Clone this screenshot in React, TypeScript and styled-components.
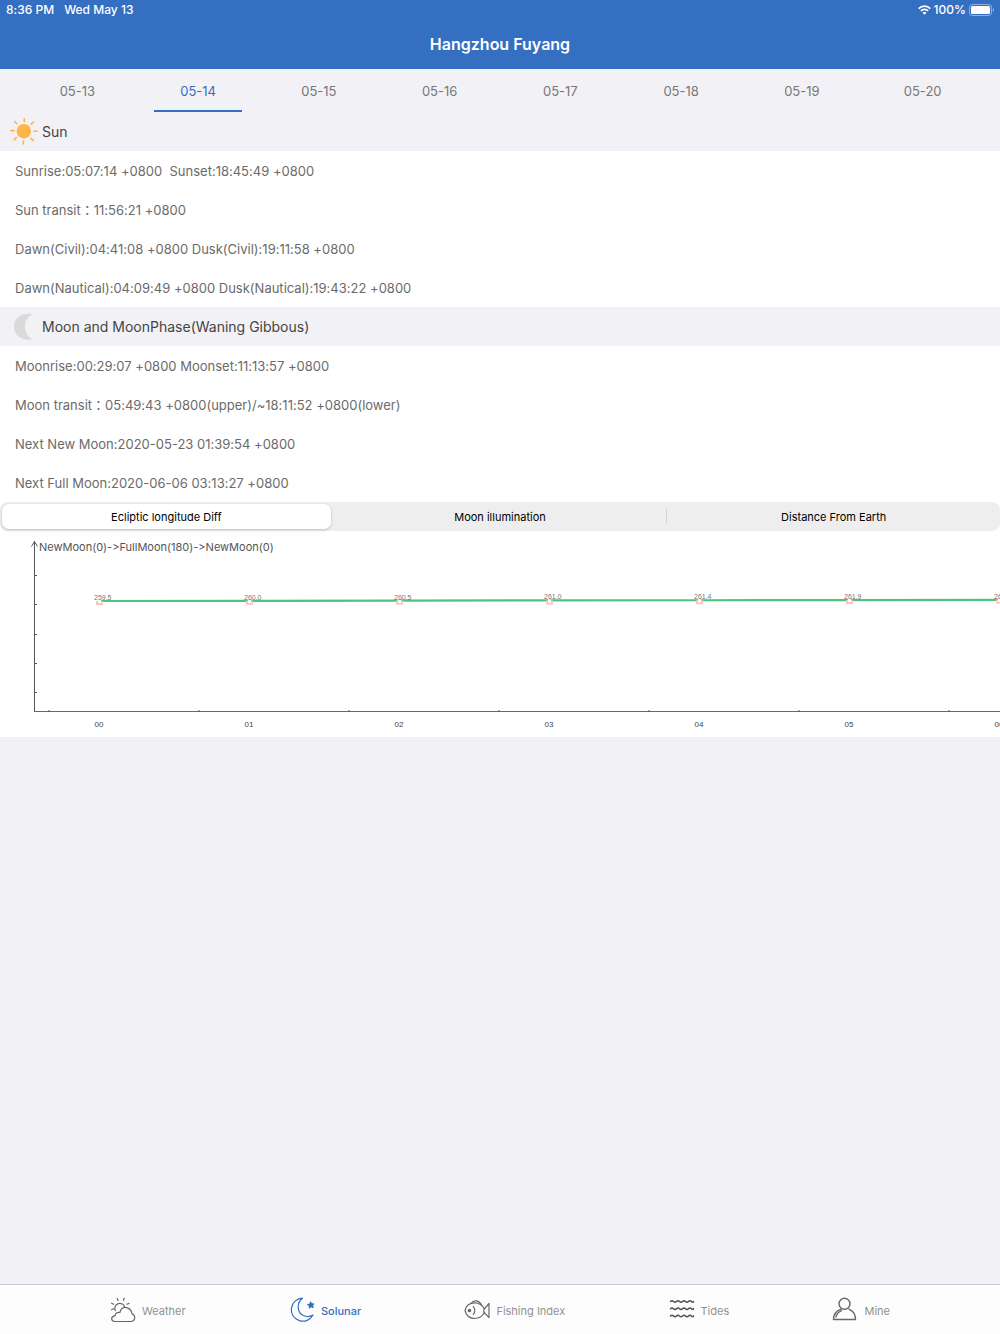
import React, { useState } from "react";
import styled, { createGlobalStyle } from "styled-components";

const BLUE = "#346fc2";

const GlobalStyle = createGlobalStyle`
  * { box-sizing: border-box; }
  body {
    margin: 0;
    background: #f2f1f6;
    font-family: Inter, "Liberation Sans", "Noto Sans CJK TC", sans-serif;
    font-variant-ligatures: no-contextual;
  }
  button {
    font-family: inherit;
    font-variant-ligatures: inherit;
    border: 0;
    padding: 0;
    margin: 0;
    background: none;
    cursor: pointer;
  }
`;

const Screen = styled.div`
  min-height: 100vh;
  display: flex;
  flex-direction: column;
`;

const Header = styled.header`
  background: ${BLUE};
  color: #fff;
`;

const StatusBar = styled.div`
  display: flex;
  align-items: center;
  height: 20px;
  padding: 0 6px;
  font-size: 12px;
  font-weight: 500;
  line-height: 20px;
`;

const StatusDate = styled.span`
  margin-left: 10px;
`;

const StatusRight = styled.div`
  display: flex;
  align-items: center;
  gap: 3px;
  margin-left: auto;
`;

const Title = styled.h1`
  margin: 0;
  height: 49px;
  line-height: 49px;
  text-align: center;
  font-size: 16px;
  font-weight: 600;
`;

const DateTabs = styled.nav`
  display: flex;
  height: 43px;
  padding: 0 17px;
`;

const DateTab = styled.button<{ $active: boolean }>`
  flex: 1;
  display: flex;
  justify-content: center;
  font-size: 13px;
  color: ${(p) => (p.$active ? BLUE : "#777")};
`;

const TabLabel = styled.span<{ $active: boolean }>`
  width: 88px;
  height: 43px;
  line-height: 44px;
  border-bottom: 2px solid ${(p) => (p.$active ? BLUE : "transparent")};
`;

const SectionHeader = styled.h2`
  display: flex;
  align-items: center;
  gap: 4px;
  height: 39px;
  margin: 0;
  padding: 0 10px;
  line-height: 38px;
  font-size: 14px;
  font-weight: 400;
  color: #444;
`;

const Row = styled.p`
  margin: 0;
  height: 39px;
  padding: 0 15px;
  line-height: 40px;
  font-size: 13px;
  color: #6b6b6b;
  background: #fff;
  white-space: pre;
`;

const SegmentBackdrop = styled.div`
  background: #fff;
`;

const Segments = styled.div`
  display: flex;
  align-items: center;
  height: 29px;
  padding: 0 2px;
  border-radius: 8px;
  background: #eee;
`;

const Segment = styled.button<{ $active: boolean }>`
  flex: 1;
  height: 25px;
  border-radius: 7px;
  font-size: 11px;
  font-weight: 400;
  color: #000;
  ${(p) => p.$active && "background: #fff; box-shadow: 0 1px 3px rgba(0, 0, 0, 0.2);"}
`;

const Divider = styled.span<{ $visible: boolean }>`
  width: 1px;
  height: 15px;
  margin: 0 2px;
  background: ${(p) => (p.$visible ? "#d2d2d4" : "transparent")};
`;

const ChartPanel = styled.div`
  height: 206px;
  overflow: hidden;
  background: #fff;
`;

const ChartSvg = styled.svg`
  display: block;
  width: 100%;
  height: 206px;
`;

const ChartTitle = styled.text`
  font-size: 11px;
  fill: #555;
`;

const HourLabel = styled.text`
  font: 8px "Liberation Sans", sans-serif;
  fill: #444;
`;

const ValueLabel = styled.text`
  font: 7px "Liberation Sans", sans-serif;
  fill: #777;
`;

const TabBar = styled.nav`
  display: flex;
  justify-content: space-between;
  align-items: center;
  height: 50px;
  margin-top: auto;
  padding: 0 11%;
  border-top: 1px solid #cbcbd2;
  background: #fdfdfd;
`;

const TabButton = styled.button<{ $active: boolean }>`
  display: flex;
  align-items: center;
  gap: 6px;
  height: 49px;
  font-size: 11px;
  font-weight: ${(p) => (p.$active ? 500 : 400)};
  color: ${(p) => (p.$active ? BLUE : "#929292")};
`;

const TabName = styled.span`
  padding-top: 2px;
`;

const TabIcon = styled.svg<{ $active: boolean }>`
  width: 26px;
  height: 26px;
  fill: none;
  stroke: ${(p) => (p.$active ? BLUE : "#686868")};
  stroke-width: 1.200;
  stroke-linecap: round;
  stroke-linejoin: round;
`;

const WifiIcon = () => (
  <svg width="13" height="10" viewBox="0 0 13 10" fill="none" stroke="#fff" strokeWidth="1.8">
    <path d="M.7 3.6a8.2 8.2 0 0 1 11.6 0" />
    <path d="M2.9 5.9a5.1 5.1 0 0 1 7.2 0" />
    <path d="M6.5 9.8 4.5 7.7a2.9 2.9 0 0 1 4 0z" fill="#fff" stroke="none" />
  </svg>
);

const BatteryIcon = () => (
  <svg width="25" height="12" viewBox="0 0 25 12">
    <rect x=".5" y=".5" width="22" height="11" rx="3" fill="none" stroke="#fff" strokeOpacity=".45" />
    <rect x="2" y="2" width="19" height="8" rx="1.6" fill="#fff" />
    <path d="M23.8 4v4q1.2-.5 1.2-2t-1.2-2z" fill="#fff" opacity=".5" />
  </svg>
);

const SunIcon = () => (
  <svg width="28" height="28" viewBox="0 0 28 28" stroke="#fdb448" strokeWidth="1.6" strokeLinecap="round">
    <circle cx="13.8" cy="13.2" r="7.2" fill="#fdb448" stroke="none" />
    <path d="M14.3.9v2.900M13.300 23v3M.9 12.600h3.200M24 13.300h3M4.700 3.500l2.100 2.300M23.500 4l-2.200 2.100M4.100 21.800l2.300-2.200M21 20.200l2.200 2.400" />
  </svg>
);

const MoonIcon = () => (
  <svg width="28" height="28" viewBox="0 0 28 28">
    <path d="M22.5 1.200C12-1 4 5 4 13.500s8 15 18.500 12.800C17.500 23.800 15 19.200 15 13.500s2.500-9.800 7.500-12.300z" fill="#dadadb" />
  </svg>
);

const WeatherPaths = () => (
  <>
    <path d="M4.800 24.500h16.200a3.900 3.900 0 0 0 1-7.600C21.700 13.800 19.800 11.600 16.800 10.600c-3.300-.6-6 1.400-6.800 4.800-2.800-.5-4.700 1-4.900 3.200C.4 19.500.7 24 4.800 24.500z" />
    <path d="M5.300 13.600a5 5 0 1 1 9.400-3.100M7.200 1.400l.9 2M14.200 1.200l-.9 2.200M1.500 6.200l2.200 1.100M1.500 12.700l2-.9M19 6.400l-2.100.8" />
  </>
);

const SolunarPaths = () => (
  <>
    <path d="M13.500 1.200A11.500 11.500 0 1 0 24 18C18 21.500 9.500 18.500 9.200 10.500 9.100 6.500 10.600 3.200 13.500 1.200z" />
    <path d="m21.600 5 .8 2 2.300-.2-1.500 1.700 1 2-2-1-1.800 1.400.2-2.200-1.900-1.100 2.200-.5z" fill={BLUE} />
  </>
);

const FishPaths = () => (
  <>
    <path d="M1 13.500C2.300 8.200 6 5.800 10.700 5.800s8 2.800 9.600 6.200L25 6.500v14l-4.700-4.900c-1.600 3.400-4.900 5.900-9.600 5.900S2.300 18.800 1 13.500z" />
    <path d="M7 6.500c3-4 8-3.300 10.600 1.500M9.300 9.700c2 2.400 2 5.300 0 7.700M20.300 12c-.8 1.200-.8 2.400 0 3.600" />
    <circle cx="5.500" cy="13.500" r="1.200" fill="#686868" />
  </>
);

const wave = (y: number) =>
  `M1.500 ${y}q1.500-1.500 3 0t3 0t3 0t3 0t3 0t3 0t3 0t2 0`;

const TidesPaths = () => (
  <g stroke="#505050" strokeWidth="1.500">
    {[4.5, 11.8, 19].map((y) => (
      <path key={y} d={wave(y)} />
    ))}
  </g>
);

const MinePaths = () => (
  <g strokeWidth="1.400">
    <circle cx="12.500" cy="6.800" r="5.500" />
    <path d="M9 12.200C4.500 13.800 1.500 17.600 1.500 22.500h22c0-4.900-3-8.700-6.500-10.300M4 19.800c.7-3 2.700-5 5.500-6.200" />
  </g>
);

const dates = ["05-13", "05-14", "05-15", "05-16", "05-17", "05-18", "05-19", "05-20"];

const sunRows = [
  "Sunrise:05:07:14 +0800  Sunset:18:45:49 +0800",
  "Sun transit：11:56:21 +0800",
  "Dawn(Civil):04:41:08 +0800 Dusk(Civil):19:11:58 +0800",
  "Dawn(Nautical):04:09:49 +0800 Dusk(Nautical):19:43:22 +0800",
];

const moonRows = [
  "Moonrise:00:29:07 +0800 Moonset:11:13:57 +0800",
  "Moon transit：05:49:43 +0800(upper)/~18:11:52 +0800(lower)",
  "Next New Moon:2020-05-23 01:39:54 +0800",
  "Next Full Moon:2020-06-06 03:13:27 +0800",
];

const segments = ["Ecliptic longitude Diff", "Moon illumination", "Distance From Earth"];

const readings = [259.5, 260.0, 260.5, 261.0, 261.4, 261.9, 262.4];

const tabs = [
  { name: "Weather", Icon: WeatherPaths },
  { name: "Solunar", Icon: SolunarPaths },
  { name: "Fishing Index", Icon: FishPaths },
  { name: "Tides", Icon: TidesPaths },
  { name: "Mine", Icon: MinePaths },
];

const STEP = 150;
const pointX = (i: number) => 99 + i * STEP;
const pointY = (v: number) => 70 - (v - 259.5) * 0.4;

function Chart() {
  return (
    <ChartPanel>
      <ChartSvg role="img" aria-label="Ecliptic longitude difference by hour">
        <path d="M34.500 181V10.500M31.500 15.500l3-5 3 5" fill="none" stroke="#555" />
        <path d="M34 180.500H4000" stroke="#666" />
        {[44.5, 73.5, 103.5, 132.5, 161.5].map((y) => (
          <path key={y} d={`M34 ${y}h3`} stroke="#555" />
        ))}
        {readings.map((_, i) => (
          <path key={i} d={`M${49 + i * STEP} 181v-2`} stroke="#555" />
        ))}
        <ChartTitle x="39" y="20">NewMoon(0)-&gt;FullMoon(180)-&gt;NewMoon(0)</ChartTitle>
        <polyline
          points={readings.map((v, i) => `${pointX(i)},${pointY(v)}`).join(" ")}
          fill="none"
          stroke="#4cc47c"
          strokeWidth="2.200"
        />
        {readings.map((v, i) => (
          <g key={v}>
            <path
              d={`M${pointX(i) - 3} ${pointY(v) + 3}h7M${pointX(i) - 2} ${pointY(v) + 3}v-3M${pointX(i) + 3} ${pointY(v) + 3}v-3`}
              stroke="#fbc5bf"
              strokeWidth="2"
            />
            <rect x={pointX(i) - 1} y={pointY(v) - 1} width="3" height="3" fill="#fff" />
            <ValueLabel x={pointX(i) - 5} y={pointY(v) - 1}>{v.toFixed(1)}</ValueLabel>
            <HourLabel x={pointX(i)} y="196" textAnchor="middle">{`0${i}`}</HourLabel>
          </g>
        ))}
      </ChartSvg>
    </ChartPanel>
  );
}

export default function App() {
  const [date, setDate] = useState("05-14");
  const [segment, setSegment] = useState(0);
  const [tab, setTab] = useState("Solunar");

  return (
    <Screen>
      <GlobalStyle />
      <Header>
        <StatusBar>
          <span>8:36 PM</span>
          <StatusDate>Wed May 13</StatusDate>
          <StatusRight>
            <WifiIcon />
            <span>100%</span>
            <BatteryIcon />
          </StatusRight>
        </StatusBar>
        <Title>Hangzhou Fuyang</Title>
      </Header>
      <DateTabs>
        {dates.map((d) => (
          <DateTab key={d} $active={d === date} onClick={() => setDate(d)}>
            <TabLabel $active={d === date}>{d}</TabLabel>
          </DateTab>
        ))}
      </DateTabs>
      <main>
        <SectionHeader>
          <SunIcon />
          Sun
        </SectionHeader>
        {sunRows.map((r) => (
          <Row key={r}>{r}</Row>
        ))}
        <SectionHeader>
          <MoonIcon />
          Moon and MoonPhase(Waning Gibbous)
        </SectionHeader>
        {moonRows.map((r) => (
          <Row key={r}>{r}</Row>
        ))}
        <SegmentBackdrop>
          <Segments>
            {segments.map((s, i) => (
              <React.Fragment key={s}>
                {i > 0 && <Divider $visible={segment !== i && segment !== i - 1} />}
                <Segment $active={segment === i} onClick={() => setSegment(i)}>
                  {s}
                </Segment>
              </React.Fragment>
            ))}
          </Segments>
        </SegmentBackdrop>
        <Chart />
      </main>
      <TabBar>
        {tabs.map(({ name, Icon }) => (
          <TabButton key={name} $active={name === tab} onClick={() => setTab(name)}>
            <TabIcon $active={name === tab} viewBox="0 0 26 26">
              <Icon />
            </TabIcon>
            <TabName>{name}</TabName>
          </TabButton>
        ))}
      </TabBar>
    </Screen>
  );
}
